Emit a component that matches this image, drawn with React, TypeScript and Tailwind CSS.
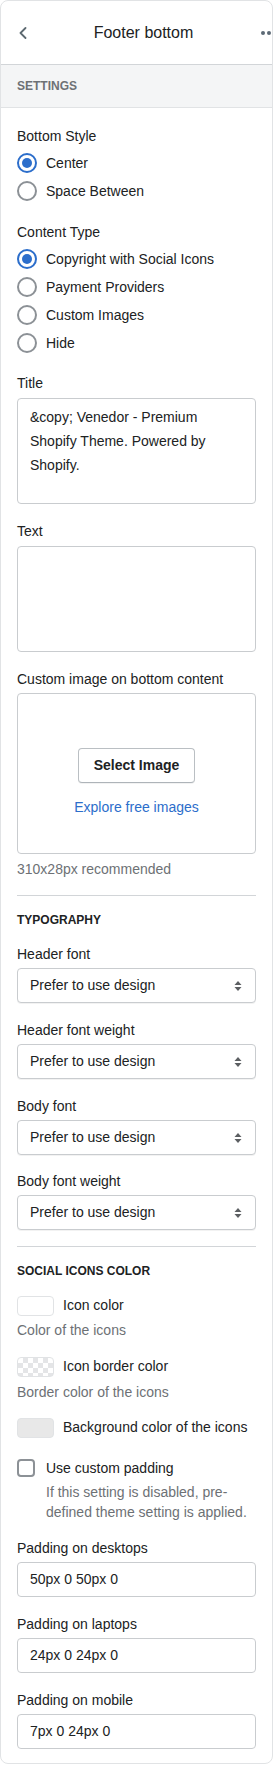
import React from "react";

const font = { fontFamily: '"Liberation Sans", Arial, sans-serif' };

function Radio({ label, checked }: { label: string; checked?: boolean }) {
  return (
    <label className="flex h-[28px] items-center">
      <span
        className={
          checked
            ? "flex h-[20px] w-[20px] items-center justify-center rounded-full border-2 border-[#2c6ecb]"
            : "flex h-[20px] w-[20px] items-center justify-center rounded-full border-2 border-[#8c9196]"
        }
      >
        {checked && <span className="h-[10px] w-[10px] rounded-full bg-[#2c6ecb]" />}
      </span>
      <span className="ml-[9px] text-[14px] leading-[20px] text-[#202223]">{label}</span>
    </label>
  );
}

function Label({ children, className = "" }: { children: React.ReactNode; className?: string }) {
  return <div className={"text-[14px] leading-[20px] text-[#202223] " + className}>{children}</div>;
}

function SelectBox({ value }: { value: string }) {
  return (
    <div className="mt-[4px] flex h-[35px] items-center justify-between rounded-[4px] border border-[#c9cccf] bg-white pl-[12px] pr-[13px] shadow-[0_1px_0_rgba(0,0,0,0.05)]">
      <span className="text-[14px] text-[#202223]">{value}</span>
      <svg width="8" height="12" viewBox="0 0 8 12">
        <path d="M4 1 L7.5 5 H0.5 Z" fill="#5c5f62" />
        <path d="M4 11 L7.5 7 H0.5 Z" fill="#5c5f62" />
      </svg>
    </div>
  );
}

function TextInput({ value }: { value: string }) {
  return (
    <div className="mt-[4px] flex h-[35px] items-center rounded-[4px] border border-[#c9cccf] bg-white px-[12px]">
      <span className="text-[14px] text-[#202223]">{value}</span>
    </div>
  );
}

function Swatch({ kind }: { kind: "white" | "clear" | "gray" }) {
  if (kind === "clear") {
    return (
      <span
        className="h-[20px] w-[37px] rounded-[4px] border border-[#e1e3e5]"
        style={{
          backgroundColor: "#fff",
          backgroundImage:
            "linear-gradient(45deg,#e4e5e7 25%,transparent 25%,transparent 75%,#e4e5e7 75%),linear-gradient(45deg,#e4e5e7 25%,transparent 25%,transparent 75%,#e4e5e7 75%)",
          backgroundSize: "10px 10px",
          backgroundPosition: "0 0,5px 5px",
        }}
      />
    );
  }
  return (
    <span
      className={
        kind === "white"
          ? "h-[20px] w-[37px] rounded-[4px] border border-[#e1e3e5] bg-white"
          : "h-[20px] w-[37px] rounded-[4px] border border-[#e1e3e5] bg-[#e8e8e8]"
      }
    />
  );
}

function SectionTitle({ children }: { children: React.ReactNode }) {
  return <div className="text-[12px] font-bold uppercase leading-[20px] text-[#202223]">{children}</div>;
}

export default function App() {
  return (
    <div className="bg-white" style={font}>
      <div className="overflow-hidden rounded-[8px] border border-[#e1e3e5] bg-white">
        {/* Header */}
        <div className="relative flex h-[64px] items-center border-b border-[#d2d5d8]">
          <svg className="ml-[18px]" width="8" height="12" viewBox="0 0 8 12">
            <path d="M6.5 1 L1.5 6 L6.5 11" fill="none" stroke="#5c6970" strokeWidth="1.8" strokeLinecap="round" strokeLinejoin="round" />
          </svg>
          <div className="flex-1 text-center text-[16px] text-[#202223]">Footer bottom</div>
          <svg className="mr-[-6px]" width="18" height="6" viewBox="0 0 18 6">
            <circle cx="3" cy="3" r="2" fill="#5c6975" />
            <circle cx="9" cy="3" r="2" fill="#5c6975" />
            <circle cx="15" cy="3" r="2" fill="#5c6975" />
          </svg>
        </div>

        {/* Settings bar */}
        <div className="flex h-[43px] items-center border-b border-[#e1e3e5] bg-[#f4f5f6] px-[16px]">
          <span className="text-[12px] font-bold uppercase text-[#6d7175]">Settings</span>
        </div>

        <div className="flex flex-col px-[16px] pb-[14px] pt-[18px]">
          <Label>Bottom Style</Label>
          <div className="mt-[3px]">
            <Radio label="Center" checked />
            <Radio label="Space Between" />
          </div>

          <Label className="mt-[17px]">Content Type</Label>
          <div className="mt-[3px]">
            <Radio label="Copyright with Social Icons" checked />
            <Radio label="Payment Providers" />
            <Radio label="Custom Images" />
            <Radio label="Hide" />
          </div>

          <Label className="mt-[16px]">Title</Label>
          <div className="mt-[5px] h-[106px] rounded-[4px] border border-[#c9cccf] px-[12px] pt-[6px] text-[14px] leading-[24px] text-[#202223]">
            <div>&amp;copy; Venedor - Premium</div>
            <div>Shopify Theme. Powered by</div>
            <div>Shopify.</div>
          </div>

          <Label className="mt-[17px]">Text</Label>
          <div className="mt-[5px] h-[106px] rounded-[4px] border border-[#c9cccf]" />

          <Label className="mt-[17px]">Custom image on bottom content</Label>
          <div className="mt-[4px] flex h-[161px] flex-col items-center justify-center rounded-[4px] border border-[#c9cccf] pt-[18px]">
            <button className="h-[35px] rounded-[4px] border border-[#babfc3] border-b-[#aeb4b9] bg-white px-[15px] text-[14px] font-bold text-[#202223] shadow-[0_1px_0_rgba(0,0,0,0.05)]">
              Select Image
            </button>
            <div className="mt-[14px] text-[14px] leading-[20px] text-[#2c6ecb]">Explore free images</div>
          </div>
          <div className="mt-[5px] text-[14px] leading-[20px] text-[#6d7175]">310x28px recommended</div>

          <div className="mt-[16px] border-t border-[#d2d5d8]" />
          <SectionTitle>
            <div className="mt-[14px]">Typography</div>
          </SectionTitle>

          <Label className="mt-[14px]">Header font</Label>
          <SelectBox value="Prefer to use design" />
          <Label className="mt-[17px]">Header font weight</Label>
          <SelectBox value="Prefer to use design" />
          <Label className="mt-[17px]">Body font</Label>
          <SelectBox value="Prefer to use design" />
          <Label className="mt-[16px]">Body font weight</Label>
          <SelectBox value="Prefer to use design" />

          <div className="mt-[16px] border-t border-[#d2d5d8]" />
          <SectionTitle>
            <div className="mt-[14px]">Social icons color</div>
          </SectionTitle>

          <div className="mt-[14px] flex items-center">
            <Swatch kind="white" />
            <span className="ml-[9px] text-[14px] text-[#202223]">Icon color</span>
          </div>
          <div className="mt-[4px] text-[14px] leading-[20px] text-[#6d7175]">Color of the icons</div>

          <div className="mt-[16px] flex items-center">
            <Swatch kind="clear" />
            <span className="ml-[9px] text-[14px] text-[#202223]">Icon border color</span>
          </div>
          <div className="mt-[5px] text-[14px] leading-[20px] text-[#6d7175]">Border color of the icons</div>

          <div className="mt-[15px] flex items-center">
            <Swatch kind="gray" />
            <span className="ml-[9px] text-[14px] text-[#202223]">Background color of the icons</span>
          </div>

          <div className="mt-[20px] flex">
            <span className="mt-[1px] h-[18px] w-[18px] shrink-0 rounded-[4px] border-2 border-[#8c9196]" />
            <div className="ml-[11px]">
              <div className="text-[14px] leading-[20px] text-[#202223]">Use custom padding</div>
              <div className="mt-[4px] text-[14px] leading-[20px] text-[#6d7175]">
                If this setting is disabled, pre-
                <br />
                defined theme setting is applied.
              </div>
            </div>
          </div>

          <Label className="mt-[16px]">Padding on desktops</Label>
          <TextInput value="50px 0 50px 0" />
          <Label className="mt-[17px]">Padding on laptops</Label>
          <TextInput value="24px 0 24px 0" />
          <Label className="mt-[17px]">Padding on mobile</Label>
          <TextInput value="7px 0 24px 0" />
        </div>
      </div>
    </div>
  );
}
